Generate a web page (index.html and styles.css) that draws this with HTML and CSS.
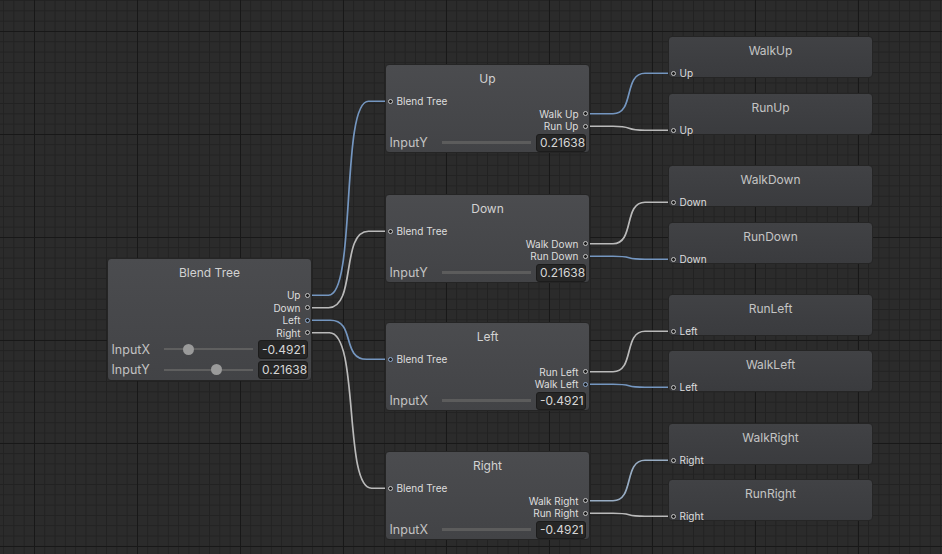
FILE: index.html
```html
<!DOCTYPE html>
<html>
<head>
<meta charset="utf-8">
<link rel="stylesheet" href="styles.css">
</head>
<body>
<div class="canvas">
  <svg class="edges" width="942" height="554" viewBox="0 0 942 554">
    <path class="e-blue" d="M309.5 295.25 H328.5 C356.5 295.25 340.5 101.25 368.5 101.25 H387.5"/>
    <path class="e-gray" d="M309.5 307.75 H328.5 C356.5 307.75 340.5 231.25 368.5 231.25 H387.5"/>
    <path class="e-blue" d="M309.5 320.25 H330.5 C355.5 320.25 341.5 359.25 366.5 359.25 H387.5"/>
    <path class="e-gray" d="M309.5 332.75 H329.5 C359.5 332.75 343.5 488.25 371.5 488.25 H387.5"/>
    <path class="e-blue" d="M587.5 113.75 H613 C635 113.75 623 73.25 645 73.25 H670.5"/>
    <path class="e-gray" d="M587.5 126.25 H613 C635 126.25 623 130.25 645 130.25 H670.5"/>
    <path class="e-gray" d="M587.5 243.75 H613 C635 243.75 623 202.25 645 202.25 H670.5"/>
    <path class="e-blue" d="M587.5 256.25 H613 C635 256.25 623 259.25 645 259.25 H670.5"/>
    <path class="e-gray" d="M587.5 371.75 H613 C635 371.75 623 331.25 645 331.25 H670.5"/>
    <path class="e-blue" d="M587.5 384.25 H613 C635 384.25 623 387.25 645 387.25 H670.5"/>
    <path class="e-steel" d="M587.5 500.75 H613 C635 500.75 623 460.25 645 460.25 H670.5"/>
    <path class="e-gray" d="M587.5 513.25 H613 C635 513.25 623 516.25 645 516.25 H670.5"/>
  </svg>

  <div class="node blend n-root">
    <div class="title">Blend Tree</div>
    <div class="ports">
      <div class="port out"><span>Up</span><i class="dot"></i></div>
      <div class="port out"><span>Down</span><i class="dot"></i></div>
      <div class="port out"><span>Left</span><i class="dot blue"></i></div>
      <div class="port out"><span>Right</span><i class="dot"></i></div>
    </div>
    <div class="param">
      <span class="plabel">InputX</span>
      <div class="slider"><i class="thumb thumb-x"></i></div>
      <div class="value">-0.4921</div>
    </div>
    <div class="param">
      <span class="plabel">InputY</span>
      <div class="slider"><i class="thumb thumb-y"></i></div>
      <div class="value">0.21638</div>
    </div>
  </div>

  <div class="node blend n-up">
    <div class="title">Up</div>
    <div class="ports">
      <div class="port in"><i class="dot"></i><span>Blend Tree</span></div>
      <div class="port out"><span>Walk Up</span><i class="dot"></i></div>
      <div class="port out"><span>Run Up</span><i class="dot"></i></div>
    </div>
    <div class="param">
      <span class="plabel">InputY</span>
      <div class="slider flat"></div>
      <div class="value">0.21638</div>
    </div>
  </div>

  <div class="node blend n-down">
    <div class="title">Down</div>
    <div class="ports">
      <div class="port in"><i class="dot"></i><span>Blend Tree</span></div>
      <div class="port out"><span>Walk Down</span><i class="dot"></i></div>
      <div class="port out"><span>Run Down</span><i class="dot"></i></div>
    </div>
    <div class="param">
      <span class="plabel">InputY</span>
      <div class="slider flat"></div>
      <div class="value">0.21638</div>
    </div>
  </div>

  <div class="node blend n-left">
    <div class="title">Left</div>
    <div class="ports">
      <div class="port in"><i class="dot blue"></i><span>Blend Tree</span></div>
      <div class="port out"><span>Run Left</span><i class="dot"></i></div>
      <div class="port out"><span>Walk Left</span><i class="dot blue"></i></div>
    </div>
    <div class="param">
      <span class="plabel">InputX</span>
      <div class="slider flat"></div>
      <div class="value">-0.4921</div>
    </div>
  </div>

  <div class="node blend n-right">
    <div class="title">Right</div>
    <div class="ports">
      <div class="port in"><i class="dot"></i><span>Blend Tree</span></div>
      <div class="port out"><span>Walk Right</span><i class="dot"></i></div>
      <div class="port out"><span>Run Right</span><i class="dot"></i></div>
    </div>
    <div class="param">
      <span class="plabel">InputX</span>
      <div class="slider flat"></div>
      <div class="value">-0.4921</div>
    </div>
  </div>

  <div class="node leaf l-1"><div class="title">WalkUp</div><div class="port in"><i class="dot"></i><span>Up</span></div></div>
  <div class="node leaf l-2"><div class="title">RunUp</div><div class="port in"><i class="dot"></i><span>Up</span></div></div>
  <div class="node leaf l-3"><div class="title">WalkDown</div><div class="port in"><i class="dot"></i><span>Down</span></div></div>
  <div class="node leaf l-4"><div class="title">RunDown</div><div class="port in"><i class="dot"></i><span>Down</span></div></div>
  <div class="node leaf l-5"><div class="title">RunLeft</div><div class="port in"><i class="dot"></i><span>Left</span></div></div>
  <div class="node leaf l-6"><div class="title">WalkLeft</div><div class="port in"><i class="dot"></i><span>Left</span></div></div>
  <div class="node leaf l-7"><div class="title">WalkRight</div><div class="port in"><i class="dot"></i><span>Right</span></div></div>
  <div class="node leaf l-8"><div class="title">RunRight</div><div class="port in"><i class="dot"></i><span>Right</span></div></div>
</div>
</body>
</html>
```
FILE: styles.css
```css
html, body {
  margin: 0;
  padding: 0;
  background: #2a2a2a;
}
.canvas {
  position: relative;
  width: 942px;
  height: 554px;
  overflow: hidden;
  font-family: Inter, "Noto Sans", sans-serif;
  background-color: #2b2b2b;
  background-image:
    linear-gradient(to right, #181818 1px, transparent 1px),
    linear-gradient(to bottom, #181818 1px, transparent 1px),
    linear-gradient(to right, #222222 1px, transparent 1px),
    linear-gradient(to bottom, #222222 1px, transparent 1px);
  background-size: 103px 103px, 103px 103px, 10.3px 10.3px, 10.3px 10.3px;
  background-position: 34px 31px, 34px 31px, 3.1px 0.1px, 3.1px 0.1px;
}
.edges {
  position: absolute;
  left: 0;
  top: 0;
}
.edges path {
  fill: none;
  stroke-width: 1.7;
}
.e-blue { stroke: #7496c0; }
.e-gray { stroke: #bababa; }
.e-steel { stroke: #98adc4; }

.node {
  position: absolute;
  box-sizing: border-box;
  width: 205px;
  border: 1px solid #252525;
  border-radius: 4px;
  color: #c8c8c8;
}
.blend {
  height: 89px;
  background: linear-gradient(#4b4c4f, #424346);
}
.leaf {
  height: 42px;
  left: 668px;
  background: linear-gradient(#414245, #3a3b3e);
}
.n-root { left: 107px; top: 258px; height: 123px; }
.n-up { left: 385px; top: 64px; }
.n-down { left: 385px; top: 194px; }
.n-left { left: 385px; top: 322px; }
.n-right { left: 385px; top: 451px; }
.l-1 { top: 36px; }
.l-2 { top: 93px; }
.l-3 { top: 165px; }
.l-4 { top: 222px; }
.l-5 { top: 294px; }
.l-6 { top: 350px; }
.l-7 { top: 423px; }
.l-8 { top: 479px; }

.title {
  height: 27px;
  margin-bottom: 3px;
  display: flex;
  align-items: center;
  justify-content: center;
  font-size: 12px;
  color: #d2d2d2;
}
.leaf .title { color: #c4c4c4; }
.ports {
  display: flex;
  flex-direction: column;
}
.port {
  height: 12.5px;
  display: flex;
  align-items: center;
  gap: 4px;
  font-size: 10px;
  line-height: 12px;
  color: #dedede;
}
.port.in { padding-left: 1.5px; }
.port.out { justify-content: flex-end; padding-right: 1.5px; }
.dot {
  display: block;
  box-sizing: border-box;
  width: 5px;
  height: 5px;
  border-radius: 50%;
  border: 1px solid #c4c4c4;
  background: #1e1e1e;
}
.dot.blue { border-color: #8eaad0; }

.param {
  height: 20.5px;
  display: flex;
  align-items: center;
  padding: 0 3px 0 3.5px;
}
.plabel {
  flex: 0 0 52.5px;
  font-size: 12.5px;
  color: #c2c2c2;
}
.slider {
  position: relative;
  flex: 1;
  height: 2px;
  margin-right: 5px;
  background: #5f5f5f;
}
.slider.flat { height: 3px; background: #5c5c5c; }
.thumb {
  position: absolute;
  top: -4.5px;
  width: 11px;
  height: 11px;
  margin-left: -5.5px;
  border-radius: 50%;
  background: #9a9a9a;
}
.thumb-x { left: 27%; }
.thumb-y { left: 59%; }
.value {
  box-sizing: border-box;
  flex: 0 0 50px;
  height: 18.5px;
  display: flex;
  align-items: center;
  padding-left: 3px;
  font-size: 12px;
  color: #d6d6d6;
  background: #262626;
  border: 1px solid #1c1c1c;
  border-radius: 3px;
  white-space: nowrap;
  overflow: hidden;
}
```
